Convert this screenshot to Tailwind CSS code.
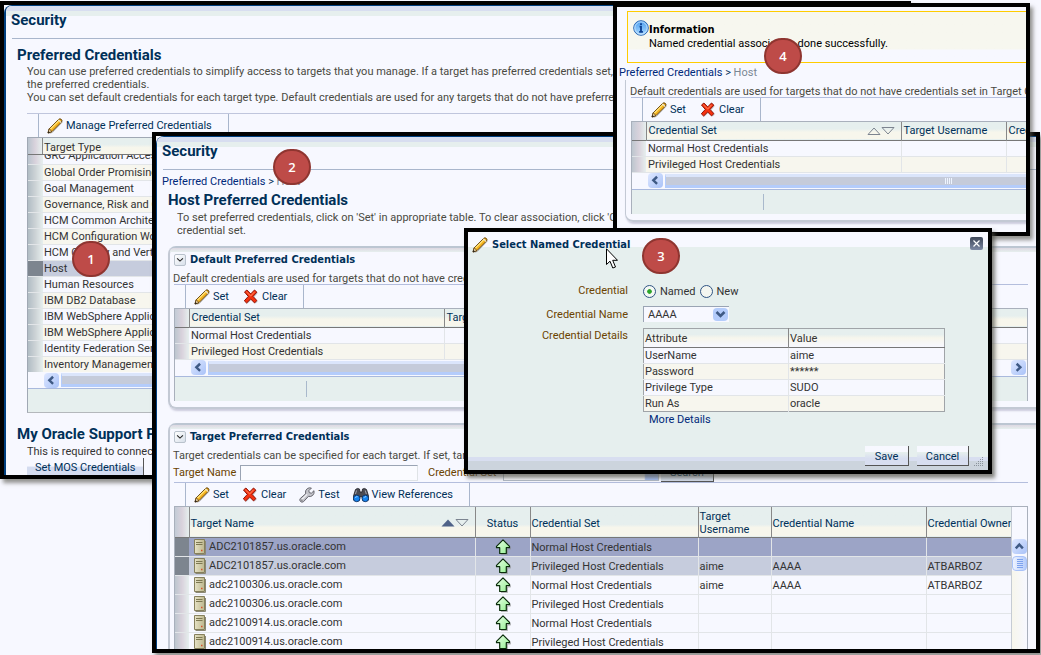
<!DOCTYPE html>
<html lang="en">
<head>
<meta charset="utf-8">
<title>Security - Preferred Credentials</title>
<script src="https://cdn.jsdelivr.net/npm/@tailwindcss/browser@4"></script>
</head>
<body class="relative h-screen overflow-hidden bg-[#f7f8ff] font-[Roboto,sans-serif] text-[11px] leading-[13px] text-[#333]">

<svg class="absolute size-0" aria-hidden="true">
  <defs>
    <linearGradient id="g-arrow" x1="0" y1="0" x2="1" y2="1"><stop offset="0" stop-color="#e8ffe6"/><stop offset="1" stop-color="#93f08f"/></linearGradient>
    <linearGradient id="g-info" x1="0" y1="0" x2="0" y2="1"><stop offset="0" stop-color="#4d9ff0"/><stop offset="1" stop-color="#a8d8ff"/></linearGradient>
    <linearGradient id="g-server" x1="0" y1="0" x2="1" y2="0"><stop offset="0" stop-color="#e6e2c6"/><stop offset="1" stop-color="#bdb78e"/></linearGradient>
    <symbol id="i-pencil" viewBox="0 0 16 16">
      <path d="M2.4 15.6 6 14 15.8 3.6" fill="none" stroke="#9a9a9a" stroke-width="1" opacity=".6"/>
      <path d="M1 15 2.2 10.8 11.6 1.4Q13 .2 14.4 1.5 15.6 2.8 14.4 4.2L5 13.6Z" fill="#f5b21c" stroke="#5d3b06" stroke-width="1"/>
      <path d="M3.4 11 12.4 2" stroke="#ffe27a" stroke-width="1.3"/>
      <path d="M11.4 1.8 14.2 4.6" stroke="#e9e3d4" stroke-width="1.2"/>
      <path d="M1 15 2.2 10.8 5 13.6Z" fill="#f3dcb0" stroke="#5d3b06" stroke-width=".8"/>
      <path d="M.8 15.2 1.5 13 3 14.5Z" fill="#222"/>
    </symbol>
    <symbol id="i-clear" viewBox="0 0 16 16">
      <path d="M2.6 3.8 4.6 1.8 8.6 5.6 12.6 1.8 14.8 4 11.2 8.2 14.8 12.4 12.6 14.6 8.6 10.8 4.4 14.8 2 12.6 6 8.2Z" fill="#999" opacity=".5"/>
      <path d="M1.5 3 3.9 1 7.7 4.9 11.5 1 13.9 3.2 10 7.4 13.9 11.6 11.5 13.9 7.7 10 3.6 14 1.3 11.8 5.3 7.4Z" fill="#f5310f" stroke="#8d1206" stroke-width="1"/>
      <path d="M3.4 2.8 7.7 7 11.6 2.8" fill="none" stroke="#ff8a60" stroke-width="1"/>
    </symbol>
    <symbol id="i-wrench" viewBox="0 0 16 16">
      <path d="M1.2 11.600 6.600 6.800Q5.800 3.400 8.400 1.500 10.200.4 12.400 1.100L9.800 3.700 10.300 5.700 12.400 6.200 15 3.700Q15.600 6.600 13.700 8.400 11.900 10 9.400 9.400L4.600 14.600Q2.900 15.800 1.500 14.500.2 13.100 1.200 11.600Z" fill="#c4c4cb" stroke="#66666e" stroke-width="1"/>
      <path d="M2.600 12.600 8 7.400" stroke="#f4f4f8" stroke-width="1.200"/>
      <circle cx="2.900" cy="13.100" r=".7" fill="#555"/>
    </symbol>
    <symbol id="i-binoculars" viewBox="0 0 16 16">
      <path d="M2.500 2.500Q4.500.6 6.500 2L7 5H9L9.500 2Q11.500.6 13.500 2.500L15.500 9V13H9.500V10H6.500V13H.5V9Z" fill="#4a4a52" stroke="#1e1e24" stroke-width=".8"/>
      <path d="M3.500 3.500 2.500 7M12.300 3.500 13.300 7" stroke="#a5a5b0" stroke-width="1"/>
      <circle cx="3.700" cy="11.400" r="3.300" fill="#1583f0" stroke="#12305c" stroke-width=".9"/>
      <circle cx="12.300" cy="11.400" r="3.300" fill="#1583f0" stroke="#12305c" stroke-width=".9"/>
      <path d="M2.300 10.800Q3 9.400 4.600 9.700M10.900 10.800Q11.600 9.400 13.200 9.700" fill="none" stroke="#9fd4ff" stroke-width="1"/>
    </symbol>
    <symbol id="i-server" viewBox="0 0 12 16">
      <path d="M11.500 2V15.500H1.500" fill="none" stroke="#8b8875" stroke-width="1"/>
      <path d="M.5.5H10.500V14.500H.5Z" fill="url(#g-server)" stroke="#857f5c" stroke-width="1"/>
      <path d="M2 3.500H8.500M2 5.500H8.500" stroke="#7d7852" stroke-width="1"/>
      <path d="M7 11.500H8.500" stroke="#d8502a" stroke-width="1.500"/>
    </symbol>
    <symbol id="i-up" viewBox="0 0 16 16">
      <path d="M9 1.700 15.700 8.400V10H12.500V15.500H6" fill="none" stroke="#888" stroke-width="1" opacity=".6"/>
      <path d="M8 .9 14.500 7.400V8.700H11.300V14.500H4.700V8.700H1.500V7.400Z" fill="url(#g-arrow)" stroke="#0b2d0b" stroke-width="1.200" stroke-linejoin="round"/>
    </symbol>
    <symbol id="i-left" viewBox="0 0 16 16"><path d="M9.700 4 5.700 7.800 9.700 11.600" fill="none" stroke="#3f5a85" stroke-width="2.600"/></symbol>
    <symbol id="i-right" viewBox="0 0 16 16"><path d="M6 4 10 7.800 6 11.600" fill="none" stroke="#3f5a85" stroke-width="2.600"/></symbol>
    <symbol id="i-chevdown" viewBox="0 0 12 12"><path d="M2.500 4 6 7.300 9.500 4" fill="none" stroke="#222" stroke-width="1.300"/></symbol>
    <symbol id="i-sort" viewBox="0 0 28 8"><path d="M1 7.500 7 1 13 7.500Z" fill="none" stroke="#7c8490" stroke-width="1"/><path d="M15 .5H27L21 7Z" fill="none" stroke="#7c8490" stroke-width="1"/></symbol>
    <symbol id="i-sorted" viewBox="0 0 28 8"><path d="M.5 7.500 7 .5 13.500 7.500Z" fill="#4f6288"/><path d="M15 .5H27L21 7Z" fill="none" stroke="#7c8490" stroke-width="1"/></symbol>
  </defs>
</svg>

<!-- Step 1: preferred credentials overview -->
<section class="absolute left-0 right-[130px] top-px h-[478px] overflow-hidden border-4 border-black bg-[#f7f8ff] shadow-[3px_4px_4px_rgba(80,80,70,0.6)]">
  <div class="flex h-full flex-col rounded-tl-lg border-l-2 border-t border-[#003f7f]">
    <div class="h-[5px] shrink-0 rounded-tl-md bg-[#d8def0]"></div>
    <div class="h-[5px] shrink-0 bg-[#e6efee]"></div>
    <h1 class="-mt-[7px] ml-[5px] text-[15px] font-bold leading-[22px] text-[#003058]">Security</h1>
    <div class="ml-[6px] mt-[7px] border-t border-[#a9b6cc]"></div>
    <h2 class="ml-[11px] mt-[7px] text-[15px] font-bold leading-[18px] text-[#003058]">Preferred Credentials</h2>
    <p class="ml-[21px] mt-px whitespace-nowrap text-[#4a4a42]">You can use preferred credentials to simplify access to targets that you manage. If a target has preferred credentials set,<br>the preferred credentials.<br>You can set default credentials for each target type. Default credentials are used for any targets that do not have preferred</p>
    <div class="ml-[21px] mt-[9px] flex h-6 shrink-0 border-t border-[#c0c6dd]">
      <div class="ml-[11px] flex items-center border-x border-[#a9b6cc] pl-2 pr-4">
        <button class="flex items-center gap-[3px] text-[#003058]"><svg class="size-4"><use href="#i-pencil"/></svg>Manage Preferred Credentials</button>
      </div>
    </div>
    <div class="ml-[21px] shrink-0 border border-[#a0a8b4] border-b-[#b4b8bc] border-r-0">
      <div class="flex h-[17px] border-b border-[#777] bg-linear-to-b from-[#e6efee] from-40% to-[#f7f6ec] to-60%">
        <div class="w-[15px] border-r border-[#888] bg-linear-to-r from-[#b9c4ce] via-[#d9d2dc] to-[#e6efee]"></div>
        <div class="pl-px pt-px leading-[17px]">Target Type</div>
      </div>
      <div class="h-[217px] overflow-hidden">
        <table class="-mt-[7px] w-full table-fixed border-collapse leading-[15px]">
          <colgroup><col class="w-[15px]"><col></colgroup>
          <tbody>
            <tr class="h-4 border-b border-[#e2e5e8]"><td class="bg-linear-to-r from-[#b9c4ce] via-[#d9d2dc] to-[#e6efee]"></td><td class="truncate pl-px">GRC Application Access Controls</td></tr>
            <tr class="h-4 border-b border-[#e2e5e8] bg-[#f7f6ee]"><td class="bg-linear-to-r from-[#b0bcc4] via-[#cdd3d6] to-[#e6efee]"></td><td class="truncate pl-px">Global Order Promising</td></tr>
            <tr class="h-4 border-b border-[#e2e5e8]"><td class="bg-linear-to-r from-[#b0bcc4] via-[#cdd3d6] to-[#e6efee]"></td><td class="truncate pl-px">Goal Management</td></tr>
            <tr class="h-4 border-b border-[#e2e5e8] bg-[#f7f6ee]"><td class="bg-linear-to-r from-[#b0bcc4] via-[#cdd3d6] to-[#e6efee]"></td><td class="truncate pl-px">Governance, Risk and Compliance</td></tr>
            <tr class="h-4 border-b border-[#e2e5e8]"><td class="bg-linear-to-r from-[#b0bcc4] via-[#cdd3d6] to-[#e6efee]"></td><td class="truncate pl-px">HCM Common Architecture</td></tr>
            <tr class="h-4 border-b border-[#e2e5e8] bg-[#f7f6ee]"><td class="bg-linear-to-r from-[#b0bcc4] via-[#cdd3d6] to-[#e6efee]"></td><td class="truncate pl-px">HCM Configuration Workbench</td></tr>
            <tr class="h-4 border-b border-[#e2e5e8]"><td class="bg-linear-to-r from-[#b0bcc4] via-[#cdd3d6] to-[#e6efee]"></td><td class="truncate pl-px">HCM Country and Vertical</td></tr>
            <tr class="h-4 border-b border-[#e2e5e8] bg-[#c6ccdd]"><td class="bg-[#7d858f]"></td><td class="truncate pl-px">Host</td></tr>
            <tr class="h-4 border-b border-[#e2e5e8]"><td class="bg-linear-to-r from-[#b0bcc4] via-[#cdd3d6] to-[#e6efee]"></td><td class="truncate pl-px">Human Resources</td></tr>
            <tr class="h-4 border-b border-[#e2e5e8] bg-[#f7f6ee]"><td class="bg-linear-to-r from-[#b0bcc4] via-[#cdd3d6] to-[#e6efee]"></td><td class="truncate pl-px">IBM DB2 Database</td></tr>
            <tr class="h-4 border-b border-[#e2e5e8]"><td class="bg-linear-to-r from-[#b0bcc4] via-[#cdd3d6] to-[#e6efee]"></td><td class="truncate pl-px">IBM WebSphere Application Server</td></tr>
            <tr class="h-4 border-b border-[#e2e5e8] bg-[#f7f6ee]"><td class="bg-linear-to-r from-[#b0bcc4] via-[#cdd3d6] to-[#e6efee]"></td><td class="truncate pl-px">IBM WebSphere Application Server Cell</td></tr>
            <tr class="h-4 border-b border-[#e2e5e8]"><td class="bg-linear-to-r from-[#b0bcc4] via-[#cdd3d6] to-[#e6efee]"></td><td class="truncate pl-px">Identity Federation Server</td></tr>
            <tr class="h-4 border-b border-[#e2e5e8] bg-[#f7f6ee]"><td class="bg-linear-to-r from-[#b0bcc4] via-[#cdd3d6] to-[#e6efee]"></td><td class="truncate pl-px">Inventory Management</td></tr>
          </tbody>
        </table>
      </div>
      <div class="flex h-[17px] items-center gap-[2px] border-b border-[#a9b9dd] pl-4">
        <button aria-label="Scroll left" class="size-[15px] rounded-sm bg-linear-to-br from-[#dfe8ff] to-[#a9c2f8]"><svg class="size-[15px]"><use href="#i-left"/></svg></button>
        <div class="h-[14px] flex-1 border-y-3 border-l border-[#b4ccfb] border-t-[#dbe5fb] bg-[#c5cbda]"></div>
      </div>
      <div class="h-[23px] bg-[#e6efee]"></div>
    </div>
    <h2 class="ml-[11px] mt-3 whitespace-nowrap text-[15px] font-bold leading-[18px] text-[#003058]">My Oracle Support Preferred Credentials</h2>
    <p class="ml-[21px] mt-[2px] whitespace-nowrap">This is required to connect</p>
    <div class="ml-[21px] flex"><button class="h-[18px] shrink-0 whitespace-nowrap border-r border-[#555] bg-linear-to-b from-[#f7f8ff] from-45% to-[#d4dcf0] to-50% px-2 text-[#003058]">Set MOS Credentials</button></div>
  </div>
</section>

<!-- Step 2: host preferred credentials -->
<section class="absolute left-[152px] right-px top-[132px] h-[521px] overflow-hidden border-4 border-black bg-[#f7f8ff] shadow-[3px_4px_4px_rgba(80,80,70,0.6)]">
  <div class="flex flex-col rounded-tl-lg border-l border-t border-[#003f7f]">
    <div class="h-[5px] rounded-tl-md bg-[#d8def0]"></div>
    <div class="h-[5px] bg-[#e6efee]"></div>
    <h1 class="-mt-[7px] ml-[5px] text-[15px] font-bold leading-[22px] text-[#003058]">Security</h1>
    <div class="ml-[6px] mt-[7px] border-t border-[#a9b6cc]"></div>
    <nav class="ml-[5px] mt-[5px] text-[#7b8794]"><a href="#" class="text-[#00297a]">Preferred Credentials</a> <span class="text-[#003058]">&gt;</span> Host</nav>
    <h2 class="ml-[11px] mt-[3px] text-[15px] font-bold leading-[18px] text-[#003058]">Host Preferred Credentials</h2>
    <p class="ml-[20px] mt-[2px] whitespace-nowrap text-[#4a4a42]">To set preferred credentials, click on 'Set' in appropriate table. To clear association, click 'Clear'<br>credential set.</p>

    <section class="ml-[11px] mt-[9px] h-[163px] rounded-l-lg border-2 border-r-0 border-[#c3c9d4] border-t-[#bcc6d2] pl-[4px] pr-[8px] shadow-[1px_2px_2px_#ccd]">
      <div class="-ml-1 -mr-2 h-[4px] rounded-tl-md bg-linear-to-b from-[#ddd8e2] to-[#e6efee]"></div>
      <div class="flex items-center gap-1">
        <button aria-label="Collapse default credentials" class="size-3 rounded-xs border border-[#b9c2cc] bg-linear-to-br from-white to-[#d8e0ea]"><svg class="size-[10px]"><use href="#i-chevdown"/></svg></button>
        <h3 class="font-['DejaVu_Sans_Condensed',sans-serif] text-[11px] font-bold leading-4 text-[#003058]">Default Preferred Credentials</h3>
      </div>
      <p class="-ml-px mt-[4px] whitespace-nowrap text-[#4a4a42]">Default credentials are used for targets that do not have credentials set</p>
      <div class="-mt-px flex h-6 border-t border-[#b4bedd]">
        <div class="ml-[11px] flex items-center gap-[14px] border-x border-[#a9b6cc] pl-2 pr-4 text-[#003058]">
          <button class="flex items-center gap-[3px]"><svg class="size-4"><use href="#i-pencil"/></svg>Set</button>
          <button class="flex items-center gap-[3px]"><svg class="size-4"><use href="#i-clear"/></svg>Clear</button>
        </div>
      </div>
      <div class="border border-[#a9b0bc] border-b-0">
        <table class="w-full table-fixed border-collapse text-left leading-[15px]">
          <colgroup><col class="w-[14px]"><col class="w-[255px]"><col class="w-[105px]"><col></colgroup>
          <thead><tr class="h-[18px] border-b border-[#777] bg-linear-to-b from-[#e6efee] from-40% to-[#f7f6ec] to-60% text-[#003058]"><th class="border-r border-[#888] bg-linear-to-r from-[#c2cbd6] via-[#d9d2dc] to-[#e6efee]"></th><th class="border-r border-[#888] pl-[2px] font-normal">Credential Set</th><th class="whitespace-nowrap border-r border-[#888] pl-[2px] font-normal">Target Username</th><th></th></tr></thead>
          <tbody>
            <tr class="h-4 border-b border-[#e2e5e8]"><td class="bg-linear-to-r from-[#bcc6ce] via-[#d9d2dc] to-[#e6efee]"></td><td class="border-r border-[#e2e5e8] pl-[2px]">Normal Host Credentials</td><td></td><td></td></tr>
            <tr class="h-4 border-b border-[#e2e5e8] bg-[#f7f6ee]"><td class="bg-linear-to-r from-[#bcc6ce] via-[#d9d2dc] to-[#e6efee]"></td><td class="border-r border-[#e2e5e8] pl-[2px]">Privileged Host Credentials</td><td></td><td></td></tr>
          </tbody>
        </table>
        <div class="flex h-[17px] items-center gap-[2px] border-b border-[#a9b9dd] pl-4 pr-px">
          <button aria-label="Scroll left" class="size-[15px] rounded-sm bg-linear-to-br from-[#dfe8ff] to-[#a9c2f8]"><svg class="size-[15px]"><use href="#i-left"/></svg></button>
          <div class="h-[14px] flex-1 border-y-3 border-l border-[#b4ccfb] border-t-[#dbe5fb] bg-[#c5cbda]"></div>
          <div class="w-28"></div>
          <button aria-label="Scroll right" class="size-[15px] rounded-sm bg-linear-to-br from-[#dfe8ff] to-[#a9c2f8]"><svg class="size-[15px]"><use href="#i-right"/></svg></button>
        </div>
        <div class="flex h-6 items-center bg-[#e6efee] pl-[131px]"><div class="h-4 border-l border-[#a9b9cc]"></div></div>
      </div>
    </section>

    <section class="ml-[11px] mt-[14px] rounded-tl-lg border-2 border-b-0 border-r-0 border-[#c3c9d4] border-t-[#bcc6d2] pl-[4px] pr-[8px]">
      <div class="-ml-1 -mr-2 h-[4px] rounded-tl-md bg-linear-to-b from-[#ddd8e2] to-[#e6efee]"></div>
      <div class="flex items-center gap-1">
        <button aria-label="Collapse target credentials" class="size-3 rounded-xs border border-[#b9c2cc] bg-linear-to-br from-white to-[#d8e0ea]"><svg class="size-[10px]"><use href="#i-chevdown"/></svg></button>
        <h3 class="font-['DejaVu_Sans_Condensed',sans-serif] text-[11px] font-bold leading-4 text-[#003058]">Target Preferred Credentials</h3>
      </div>
      <p class="-ml-px mt-[4px] whitespace-nowrap text-[#4a4a42]">Target credentials can be specified for each target. If set, target</p>
      <form class="flex h-[21px] items-center text-[#6b4300]">
        <label for="tname" class="-ml-px w-[67px] whitespace-nowrap">Target Name</label>
        <input id="tname" class="h-4 w-[178px] border border-[#dfe3e6] border-l-[#9aa4b4] border-t-[#9aa4b4] bg-[#fafbff]">
        <label for="tset" class="ml-[10px] w-[75px] whitespace-nowrap">Credential Set</label>
        <select id="tset" class="h-4 w-[156px] appearance-none border border-[#b4bcc8] bg-[#fafbff] bg-linear-to-l from-[#a9c2f8] from-8% to-[#fafbff] to-9%"><option></option></select>
        <button type="button" class="ml-[2px] h-[19px] border-b border-r border-[#555] bg-[#d4dcea] px-[9px] text-[#003058]">Search</button>
      </form>
      <div class="-mt-px flex h-6 border-t border-[#b4bedd]">
        <div class="ml-[11px] flex items-center gap-[13px] border-x border-[#a9b6cc] pl-2 pr-4 text-[#003058]">
          <button class="flex items-center gap-[3px]"><svg class="size-4"><use href="#i-pencil"/></svg>Set</button>
          <button class="flex items-center gap-[3px]"><svg class="size-4"><use href="#i-clear"/></svg>Clear</button>
          <button class="flex items-center gap-[3px]"><svg class="size-4"><use href="#i-wrench"/></svg>Test</button>
          <button class="flex items-center gap-[3px]"><svg class="size-4"><use href="#i-binoculars"/></svg>View References</button>
        </div>
      </div>
      <div class="flex border border-[#a9b0bc] border-b-0">
        <table class="w-full min-w-0 table-fixed border-collapse text-left leading-[15px]">
          <colgroup><col class="w-[14px]"><col class="w-[286px]"><col class="w-[55px]"><col class="w-[168px]"><col class="w-[73px]"><col class="w-[155px]"><col></colgroup>
          <thead><tr class="h-[30px] border-b border-[#777] bg-linear-to-b from-[#e6efee] from-60% to-[#f7f6ec] to-70% leading-[13px] text-[#003058]">
            <th class="border-r border-[#888] bg-linear-to-r from-[#c2cbd6] via-[#d9d2dc] to-[#e6efee]"></th>
            <th class="border-r border-[#888] pl-px pt-[3px] font-normal"><div class="flex items-center justify-between pr-[6px]">Target Name<svg class="h-2 w-7"><use href="#i-sorted"/></svg></div></th>
            <th class="border-r border-[#888] pt-[3px] text-center font-normal">Status</th>
            <th class="border-r border-[#888] pl-px pt-[3px] font-normal">Credential Set</th>
            <th class="border-r border-[#888] pl-px pt-[3px] font-normal">Target Username</th>
            <th class="border-r border-[#888] pl-px pt-[3px] font-normal">Credential Name</th>
            <th class="overflow-hidden whitespace-nowrap pl-px pt-[3px] font-normal">Credential Owner</th></tr></thead>
          <tbody>
            <tr class="h-[19px] border-b border-[#e2e5e8] bg-[#9ca4c6]"><td class="bg-[#7d858f]"></td><td class="border-r border-[#e2e5e8] pl-[5px]"><div class="flex items-center gap-[3px]"><svg class="h-4 w-3"><use href="#i-server"/></svg>ADC2101857.us.oracle.com</div></td><td class="border-r border-[#e2e5e8]"><svg class="mx-auto size-4"><use href="#i-up"/></svg></td><td class="border-r border-[#e2e5e8] pl-px pt-[2px]">Normal Host Credentials</td><td class="border-r border-[#e2e5e8]"></td><td class="border-r border-[#e2e5e8]"></td><td></td></tr>
            <tr class="h-[19px] border-b border-[#e2e5e8] bg-[#c6ccdd]"><td class="bg-[#7d858f]"></td><td class="border-r border-[#e2e5e8] pl-[5px]"><div class="flex items-center gap-[3px]"><svg class="h-4 w-3"><use href="#i-server"/></svg>ADC2101857.us.oracle.com</div></td><td class="border-r border-[#e2e5e8]"><svg class="mx-auto size-4"><use href="#i-up"/></svg></td><td class="border-r border-[#e2e5e8] pl-px pt-[2px]">Privileged Host Credentials</td><td class="border-r border-[#e2e5e8] pl-px pt-[2px]">aime</td><td class="border-r border-[#e2e5e8] pl-px pt-[2px]">AAAA</td><td class="pl-px pt-[2px]">ATBARBOZ</td></tr>
            <tr class="h-[19px] border-b border-[#e2e5e8]"><td class="bg-linear-to-r from-[#bcc6ce] via-[#d9d2dc] to-[#e6efee]"></td><td class="border-r border-[#e2e5e8] pl-[5px]"><div class="flex items-center gap-[3px]"><svg class="h-4 w-3"><use href="#i-server"/></svg>adc2100306.us.oracle.com</div></td><td class="border-r border-[#e2e5e8]"><svg class="mx-auto size-4"><use href="#i-up"/></svg></td><td class="border-r border-[#e2e5e8] pl-px pt-[2px]">Normal Host Credentials</td><td class="border-r border-[#e2e5e8] pl-px pt-[2px]">aime</td><td class="border-r border-[#e2e5e8] pl-px pt-[2px]">AAAA</td><td class="pl-px pt-[2px]">ATBARBOZ</td></tr>
            <tr class="h-[19px] border-b border-[#e2e5e8]"><td class="bg-linear-to-r from-[#bcc6ce] via-[#d9d2dc] to-[#e6efee]"></td><td class="border-r border-[#e2e5e8] pl-[5px]"><div class="flex items-center gap-[3px]"><svg class="h-4 w-3"><use href="#i-server"/></svg>adc2100306.us.oracle.com</div></td><td class="border-r border-[#e2e5e8]"><svg class="mx-auto size-4"><use href="#i-up"/></svg></td><td class="border-r border-[#e2e5e8] pl-px pt-[2px]">Privileged Host Credentials</td><td class="border-r border-[#e2e5e8]"></td><td class="border-r border-[#e2e5e8]"></td><td></td></tr>
            <tr class="h-[19px] border-b border-[#e2e5e8]"><td class="bg-linear-to-r from-[#bcc6ce] via-[#d9d2dc] to-[#e6efee]"></td><td class="border-r border-[#e2e5e8] pl-[5px]"><div class="flex items-center gap-[3px]"><svg class="h-4 w-3"><use href="#i-server"/></svg>adc2100914.us.oracle.com</div></td><td class="border-r border-[#e2e5e8]"><svg class="mx-auto size-4"><use href="#i-up"/></svg></td><td class="border-r border-[#e2e5e8] pl-px pt-[2px]">Normal Host Credentials</td><td class="border-r border-[#e2e5e8]"></td><td class="border-r border-[#e2e5e8]"></td><td></td></tr>
            <tr class="h-[19px] border-b border-[#e2e5e8]"><td class="bg-linear-to-r from-[#bcc6ce] via-[#d9d2dc] to-[#e6efee]"></td><td class="border-r border-[#e2e5e8] pl-[5px]"><div class="flex items-center gap-[3px]"><svg class="h-4 w-3"><use href="#i-server"/></svg>adc2100914.us.oracle.com</div></td><td class="border-r border-[#e2e5e8]"><svg class="mx-auto size-4"><use href="#i-up"/></svg></td><td class="border-r border-[#e2e5e8] pl-px pt-[2px]">Privileged Host Credentials</td><td class="border-r border-[#e2e5e8]"></td><td class="border-r border-[#e2e5e8]"></td><td></td></tr>
          </tbody>
        </table>
        <div class="flex w-4 shrink-0 flex-col items-center border-l border-[#c6ccd4] pt-8">
          <button aria-label="Scroll up" class="size-[15px] rounded-sm bg-linear-to-br from-[#dfe8ff] to-[#a9c2f8]"><svg class="size-[15px]" viewBox="0 0 16 16"><path d="M4 10 7.800 6 11.600 10" fill="none" stroke="#3f5a85" stroke-width="2.600"/></svg></button>
          <div class="mt-[2px] h-[15px] w-[15px] rounded-sm border border-[#a9c2f8] bg-linear-to-r from-[#f0f4ff] to-[#b4ccfb]"><svg class="size-[13px]" viewBox="0 0 13 13"><path d="M4 2.500H10M4 4.500H10M4 6.500H10M4 8.500H10M4 10.500H10" stroke="#7da2ee"/></svg></div>
          <div class="w-full flex-1 bg-linear-to-r from-[#f7f6ec] to-[#f7f8ff]"></div>
        </div>
      </div>
    </section>
  </div>
</section>

<!-- Step 4: confirmation -->
<section class="absolute left-[613px] right-[11px] top-[3px] h-[233px] overflow-hidden border-4 border-black bg-[#f7f8ff] pt-1 shadow-[3px_4px_4px_rgba(80,80,70,0.6)]">
  <div class="ml-[10px] flex h-[52px] border border-r-0 border-[#fc0] bg-linear-to-b from-[#f7f7ef] from-74% to-[#f7f8ff] to-76% pl-[5px] pt-2 text-black">
    <svg class="size-4 shrink-0" viewBox="0 0 16 16"><circle cx="8" cy="8" r="7.300" fill="url(#g-info)" stroke="#2a68b4"/><circle cx="8" cy="8" r="6.200" fill="none" stroke="#d4ebff" stroke-width=".8"/><path d="M8 3.200V5M6.600 6.600H8V11.600M6.200 11.900H9.900" fill="none" stroke="#0b3f92" stroke-width="1.800"/></svg>
    <div class="whitespace-nowrap pt-[3px] leading-[14px]"><strong class="block font-['DejaVu_Sans_Condensed',sans-serif]">Information</strong>Named credential association done successfully.</div>
  </div>
  <nav class="ml-[2px] mt-[3px] text-[#7b8794]"><a href="#" class="text-[#00297a]">Preferred Credentials</a> <span class="text-[#003058]">&gt;</span> Host</nav>
  <div class="ml-2 mt-px h-[142px] rounded-bl-lg border-b-2 border-l border-[#c3c9d4] pl-[5px] pt-[5px] shadow-[1px_2px_2px_#ccd]">
    <p class="-ml-px whitespace-nowrap text-[#4a4a42]">Default credentials are used for targets that do not have credentials set in Target Credentials</p>
    <div class="-mt-px flex h-6 border-t border-[#b4bedd]">
      <div class="ml-[11px] flex items-center gap-[14px] border-x border-[#a9b6cc] pl-2 pr-4 text-[#003058]">
        <button class="flex items-center gap-[3px]"><svg class="size-4"><use href="#i-pencil"/></svg>Set</button>
        <button class="flex items-center gap-[3px]"><svg class="size-4"><use href="#i-clear"/></svg>Clear</button>
      </div>
    </div>
    <div class="border border-b-0 border-r-0 border-[#a9b0bc]">
      <table class="w-full table-fixed border-collapse text-left leading-[15px]">
        <colgroup><col class="w-[14px]"><col class="w-[255px]"><col class="w-[105px]"><col></colgroup>
        <thead><tr class="h-[18px] border-b border-[#777] bg-linear-to-b from-[#e6efee] from-40% to-[#f7f6ec] to-60% text-[#003058]"><th class="border-r border-[#888] bg-linear-to-r from-[#c2cbd6] via-[#d9d2dc] to-[#e6efee]"></th><th class="border-r border-[#888] pl-[2px] font-normal"><div class="flex items-center justify-between pr-[6px]">Credential Set<svg class="h-2 w-7"><use href="#i-sort"/></svg></div></th><th class="whitespace-nowrap border-r border-[#888] pl-[2px] font-normal">Target Username</th><th class="overflow-hidden whitespace-nowrap pl-[2px] font-normal">Credential</th></tr></thead>
        <tbody>
          <tr class="h-4 border-b border-[#e2e5e8]"><td class="bg-linear-to-r from-[#bcc6ce] via-[#d9d2dc] to-[#e6efee]"></td><td class="border-r border-[#e2e5e8] pl-[2px]">Normal Host Credentials</td><td class="border-r border-[#e2e5e8]"></td><td></td></tr>
          <tr class="h-4 border-b border-[#e2e5e8] bg-[#f7f6ee]"><td class="bg-linear-to-r from-[#bcc6ce] via-[#d9d2dc] to-[#e6efee]"></td><td class="border-r border-[#e2e5e8] pl-[2px]">Privileged Host Credentials</td><td class="border-r border-[#e2e5e8]"></td><td></td></tr>
        </tbody>
      </table>
      <div class="flex h-[17px] items-center gap-[2px] border-b border-[#a9b9dd] pl-4">
        <button aria-label="Scroll left" class="size-[15px] rounded-sm bg-linear-to-br from-[#dfe8ff] to-[#a9c2f8]"><svg class="size-[15px]"><use href="#i-left"/></svg></button>
        <div class="flex h-[14px] flex-1 items-center justify-end border-y-3 border-l border-[#b4ccfb] border-t-[#dbe5fb] bg-[#c5cbda] pr-[73px]"><svg class="h-[6px] w-2" viewBox="0 0 8 6"><path d="M.5 0V6M2.500 0V6M4.500 0V6M6.500 0V6" stroke="#eef4ff"/></svg></div>
      </div>
      <div class="flex h-6 items-center bg-[#e6efee] pl-[131px]"><div class="h-4 border-l border-[#a9b9cc]"></div></div>
    </div>
  </div>
</section>

<!-- Step 3: named credential dialog -->
<section role="dialog" aria-labelledby="dlg" class="absolute left-[464px] top-[228px] flex h-[246px] w-[528px] flex-col border-4 border-black bg-[#e6efee] shadow-[3px_4px_4px_rgba(80,80,70,0.7)]">
  <header class="flex h-[15px] shrink-0 items-start bg-[#f7f8ff] pl-1 pr-[5px] pt-[5px]">
    <svg class="size-4 shrink-0"><use href="#i-pencil"/></svg>
    <h2 id="dlg" class="ml-1 flex-1 font-['DejaVu_Sans_Condensed',sans-serif] text-[11px] font-bold leading-4 text-[#003058]">Select Named Credential</h2>
    <button aria-label="Close" class="size-[13px] rounded-xs bg-linear-to-b from-[#3d4658] to-[#7d89a4]"><svg class="size-[13px]" viewBox="0 0 13 13"><path d="M3.500 3.500 9.500 9.500M9.500 3.500 3.500 9.500" stroke="#fff" stroke-width="1.200"/></svg></button>
  </header>
  <form class="flex flex-1 flex-col pt-9">
    <div class="grid grid-cols-[160px_1fr] gap-x-[15px]">
      <span class="h-6 text-right leading-4 text-[#6b4300]">Credential</span>
      <div class="flex h-4 items-center gap-1">
        <input id="rn" type="radio" name="cred" checked class="size-[13px] appearance-none rounded-full border border-[#2f5483] bg-radial from-[#2aa52a] from-25% to-[#f4f8f4] to-35%">
        <label for="rn">Named</label>
        <input id="rw" type="radio" name="cred" class="size-[13px] appearance-none rounded-full border border-[#2f5483] bg-[#f4f6f0]">
        <label for="rw">New</label>
      </div>
      <label for="cname" class="h-6 text-right leading-4 text-[#6b4300]">Credential Name</label>
      <div class="-mt-px flex h-4 w-[86px] border-l border-t border-[#9aa4b4] bg-[#f7f8ff]">
        <select id="cname" class="w-[69px] appearance-none pl-1"><option>AAAA</option></select>
        <svg class="mt-px h-[13px] w-[15px] rounded-sm bg-[#b4ccfb]" viewBox="0 0 15 13"><path d="M3.500 4 7.500 8 11.500 4" fill="none" stroke="#3f5a85" stroke-width="2.600"/></svg>
      </div>
      <span class="-mt-[3px] text-right leading-4 text-[#6b4300]">Credential Details</span>
      <div class="-mt-[3px]">
        <table class="w-[302px] table-fixed border-collapse border border-[#a0a4a8] text-left leading-[15px]">
          <colgroup><col class="w-[145px]"><col></colgroup>
          <thead><tr class="h-[19px] border-b border-[#777] bg-linear-to-b from-[#e6efee] from-30% via-[#f7f6ec] via-50% to-[#f7f8ff]"><th class="border-r border-[#888] pl-px font-normal">Attribute</th><th class="pl-px font-normal">Value</th></tr></thead>
          <tbody>
            <tr class="h-4 border-b border-[#e2e5e8] bg-[#f7f8ff]"><td class="border-r border-[#e2e5e8] pl-px">UserName</td><td class="pl-px">aime</td></tr>
            <tr class="h-4 border-b border-[#e2e5e8] bg-[#f7f6ee]"><td class="border-r border-[#e2e5e8] pl-px">Password</td><td class="pl-px">******</td></tr>
            <tr class="h-4 border-b border-[#e2e5e8] bg-[#f7f8ff]"><td class="border-r border-[#e2e5e8] pl-px">Privilege Type</td><td class="pl-px">SUDO</td></tr>
            <tr class="h-4 bg-[#f7f6ee]"><td class="border-r border-[#e2e5e8] pl-px">Run As</td><td class="pl-px">oracle</td></tr>
          </tbody>
        </table>
        <a href="#" class="ml-[6px] leading-4 text-[#00297a]">More Details</a>
      </div>
    </div>
    <div class="mt-auto flex items-end justify-end gap-2 bg-[linear-gradient(to_top,#ccd4dd_9px,#d8def0_9px,#d8def0_13px,transparent_13px)] pb-1 pr-[5px]">
      <button type="button" class="h-5 w-[44px] border-b border-r border-[#555] bg-linear-to-b from-[#f7f8ff] from-33% via-[#e6efee] via-34% to-[#d8def0] to-66% pt-px text-[#003058]">Save</button>
      <button type="button" class="h-5 w-[52px] border-b border-r border-[#555] bg-linear-to-b from-[#f7f8ff] from-33% via-[#e6efee] via-34% to-[#d8def0] to-66% pt-px text-[#003058]">Cancel</button>
      <svg class="-ml-1 size-[10px]" viewBox="0 0 10 10"><path d="M9.500 1V10M7.500 3V10M5.500 5V10M3.500 7V10M1.500 9V10" stroke="#8b939c" stroke-dasharray="1 1"/></svg>
    </div>
  </form>
</section>

<!-- Mouse pointer and step badges -->
<svg class="absolute left-[606px] top-[248px] h-[21px] w-3" viewBox="0 0 12 21"><path d="M.5.8V16.500L4 13.200 6.800 20 9.500 19 6.700 12.300H11.500Z" fill="#fff" stroke="#000"/></svg>
<div class="absolute left-[72px] top-[241px] flex h-9 w-[38px] items-center justify-center rounded-full border-2 border-[#8f3530] bg-[#be4b48] font-['Open_Sans',sans-serif] text-[13px] font-semibold text-white">1</div>
<div class="absolute left-[273px] top-[149px] flex h-9 w-[38px] items-center justify-center rounded-full border-2 border-[#8f3530] bg-[#be4b48] font-['Open_Sans',sans-serif] text-[13px] font-semibold text-white">2</div>
<div class="absolute left-[642px] top-[238px] flex h-9 w-[38px] items-center justify-center rounded-full border-2 border-[#8f3530] bg-[#be4b48] font-['Open_Sans',sans-serif] text-[13px] font-semibold text-white">3</div>
<div class="absolute left-[764px] top-[38px] flex h-9 w-[38px] items-center justify-center rounded-full border-2 border-[#8f3530] bg-[#be4b48] font-['Open_Sans',sans-serif] text-[13px] font-semibold text-white">4</div>
</body>
</html>
